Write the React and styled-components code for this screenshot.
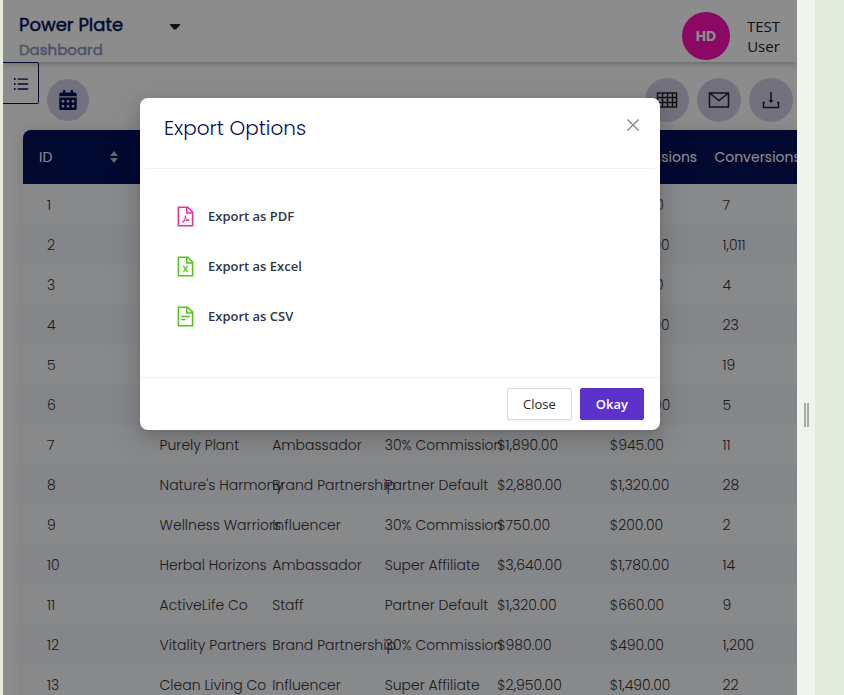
import React from "react";
import styled, { createGlobalStyle } from "styled-components";
import {
  AiOutlineClose,
  AiOutlineFileExcel,
  AiOutlineFilePdf,
  AiOutlineFileText,
  AiOutlineUnorderedList,
} from "react-icons/ai";
import { FaCalendarAlt } from "react-icons/fa";

const display = `Poppins, Inter, "Open Sans", sans-serif`;
const body = `"Segoe UI", "Open Sans", "Noto Sans", sans-serif`;
const navy = "#04125a";

const GlobalStyle = createGlobalStyle`
  *, *::before, *::after { box-sizing: border-box; }
  body { margin: 0; font-family: ${body}; font-size: 14px; color: #222; }
  button { font: inherit; cursor: pointer; }
`;

const Shell = styled.div`
  display: flex;
  height: 100vh;
  background: #e2ebdc;
  padding-left: 3px;
`;

const Screen = styled.div`
  position: relative;
  flex: 1;
  min-width: 0;
  overflow: hidden;
  background: #fff;
`;

const Splitter = styled.div`
  display: flex;
  align-items: center;
  justify-content: center;
  gap: 1px;
  width: 18px;
  padding-top: 134px;
  background: #eff5eb;
`;

const Grip = styled.span`
  width: 2px;
  height: 24px;
  background: #a8aba5;
`;

const SidePanel = styled.aside`
  width: 29px;
`;

const Header = styled.header`
  display: flex;
  justify-content: space-between;
  height: 62px;
  padding: 12px 16px;
  box-shadow: 0 2px 6px rgba(0, 0, 0, 0.25);
`;

const Brand = styled.div`
  font-family: ${display};
  color: ${navy};
`;

const BrandPicker = styled.button`
  display: flex;
  align-items: center;
  justify-content: space-between;
  width: 162px;
  height: 24px;
  padding: 0;
  border: 0;
  background: none;
  color: ${navy};
  font-size: 18px;
  font-weight: 400;
  -webkit-text-stroke: 0.5px currentColor;
`;

const Subtitle = styled.div`
  color: #8f95bd;
  font-size: 15px;
  font-weight: 400;
  line-height: 28px;
  -webkit-text-stroke: 0.5px currentColor;
`;

const Account = styled.div`
  display: flex;
  align-items: center;
  gap: 16px;
  height: 48px;
  font-size: 15px;
  font-weight: 500;
  line-height: 20px;
  text-align: center;
`;

const Avatar = styled.span`
  width: 48px;
  height: 48px;
  border-radius: 50%;
  background: #ff10b8;
  color: #fff;
  font-family: ${display};
  font-size: 14px;
  font-weight: 700;
  line-height: 48px;
`;

const UserName = styled.span`
  width: 35px;
`;

const Toolbar = styled.div`
  display: flex;
  align-items: flex-start;
  gap: 8px;
  height: 68px;
  padding-right: 4px;
`;

const MenuToggle = styled.button`
  display: flex;
  align-items: center;
  justify-content: center;
  width: 36px;
  height: 42px;
  padding: 2px 0 0;
  border: 1px solid ${navy};
  border-left: 0;
  border-radius: 0 2px 2px 0;
  background: none;
  color: ${navy};
  font-size: 18px;
`;

const RoundButton = styled.button`
  display: flex;
  align-items: center;
  justify-content: center;
  width: ${(p) => p.$size}px;
  height: ${(p) => p.$size}px;
  margin-top: ${(p) => 38 - p.$size / 2}px;
  padding: 0;
  border: 0;
  border-radius: 50%;
  background: #cfd0e8;
  color: ${(p) => p.$color || "#222"};
`;

const ToolbarActions = styled.div`
  display: flex;
  gap: 8px;
  margin-left: auto;
`;

const TableArea = styled.main`
  margin-left: 20px;
  border-radius: 8px 0 0 0;
  box-shadow: 0 0 16px rgba(0, 0, 0, 0.12);
`;

const Table = styled.table`
  width: 100%;
  min-width: 788px;
  table-layout: fixed;
  border-spacing: 0;
  font-family: ${display};
  white-space: nowrap;
`;

const HeadCell = styled.th`
  height: 55px;
  padding: 0 18px 0 16px;
  border-bottom: 1px solid #f7f9fc;
  background: ${navy};
  color: #fff;
  font-size: 14px;
  font-weight: 400;
  text-align: left;

  &:first-child { border-top-left-radius: 8px; }
`;

const HeadLabel = styled.span`
  display: flex;
  align-items: center;
  justify-content: space-between;
`;

const Row = styled.tr`
  background: #f8f9fb;
  &:nth-child(even) { background: #f3f4fa; }
`;

const Cell = styled.td`
  height: 40px;
  padding: 0 0 0 24px;
  color: #333;
  font-size: 14px;
  font-weight: 300;
`;

const Mask = styled.div`
  position: absolute;
  inset: 0;
  display: flex;
  align-items: flex-start;
  justify-content: center;
  padding: 98px 24px 24px;
  background: rgba(0, 0, 0, 0.45);
`;

const Dialog = styled.section`
  width: 520px;
  max-width: 100%;
  border-radius: 8px;
  background: #fff;
  box-shadow: 0 3px 6px -4px rgba(0, 0, 0, 0.12), 0 6px 16px rgba(0, 0, 0, 0.12),
    0 9px 28px 8px rgba(0, 0, 0, 0.08);
`;

const DialogHeader = styled.div`
  display: flex;
  align-items: flex-start;
  justify-content: space-between;
  height: 71px;
  padding: 16px 16px 16px 24px;
  border-bottom: 1px solid #f0f0f0;
  border-radius: 8px;
`;

const DialogTitle = styled.h2`
  margin: 0;
  color: ${navy};
  font-family: ${display};
  font-size: 20px;
  font-weight: 300;
  line-height: 28px;
`;

const CloseIconButton = styled.button`
  display: flex;
  padding: 2px;
  border: 0;
  background: none;
  color: #8c8c8c;
  font-size: 18px;
`;

const Options = styled.div`
  display: flex;
  flex-direction: column;
  align-items: flex-start;
  gap: 18px;
  padding: 31px 34px 45px;
`;

const Option = styled.button`
  display: flex;
  align-items: center;
  gap: 11px;
  height: 32px;
  padding: 0;
  border: 0;
  background: none;
  color: #2d3748;
  font-size: 13px;
  font-weight: 600;

  svg { color: ${(p) => p.$color}; font-size: 23px; }
`;

const DialogFooter = styled.div`
  display: flex;
  justify-content: flex-end;
  gap: 8px;
  padding: 10px 16px;
  border-top: 1px solid #f0f0f0;
`;

const FooterButton = styled.button`
  height: 32px;
  padding: 0 15px;
  border: 1px solid ${(p) => (p.$primary ? "#5c31cc" : "#d9d9d9")};
  border-radius: 2px;
  background: ${(p) => (p.$primary ? "#5c31cc" : "#fff")};
  color: ${(p) => (p.$primary ? "#fff" : "#262626")};
  font-size: 13px;
  font-weight: ${(p) => (p.$primary ? 600 : 400)};
  box-shadow: 0 2px 0 rgba(0, 0, 0, 0.04);
`;

const CaretIcon = () => (
  <svg width="12" height="14" viewBox="0 -6 12 14" fill="#222" aria-hidden="true">
    <path d="M1 1h10v1L7 6.5H5L1 2z" />
  </svg>
);

const SortIcon = () => (
  <svg width="8" height="12" viewBox="0 0 8 12" fill="#bfbfbf" aria-hidden="true">
    <path d="M0 5 4 0l4 5zM0 7h8l-4 5z" />
  </svg>
);

const GridIcon = () => (
  <svg width="22" height="18" viewBox="0 0 22 18" fill="none" stroke="currentColor" strokeWidth="1.5" aria-hidden="true">
    <path d="M1.5 2h19v14h-19zM1.5 6.5h19M1.5 11.5h19M6.5 2v14M11.5 2v14M16.5 2v14" />
  </svg>
);

const MailIcon = () => (
  <svg width="22" height="18" viewBox="0 0 22 18" fill="none" stroke="currentColor" strokeWidth="1.5" aria-hidden="true">
    <path d="M1.5 2h19v14h-19zM1.5 2 11 9.5 20.5 2" />
  </svg>
);

const DownloadIcon = () => (
  <svg width="18" height="18" viewBox="0 0 18 18" fill="none" stroke="currentColor" strokeWidth="1.5" aria-hidden="true">
    <path d="M3 11.5H1.5v5h15v-5H15M9 1v9" />
    <path d="M6.5 9h5L9 12.2z" fill="currentColor" stroke="none" />
  </svg>
);

const columns = ["ID", "", "", "", "", "Commissions", "Conversions"];

const rows = [
  ["1", "", "", "", "", "$480.00", "7"],
  ["2", "", "", "", "", "$1,200.00", "1,011"],
  ["3", "", "", "", "", "$360.00", "4"],
  ["4", "", "", "", "", "$2,100.00", "23"],
  ["5", "", "", "", "", "", "19"],
  ["6", "", "", "", "", "$1,050.00", "5"],
  ["7", "Purely Plant", "Ambassador", "30% Commission", "$1,890.00", "$945.00", "11"],
  ["8", "Nature's Harmony", "Brand Partnership", "Partner Default", "$2,880.00", "$1,320.00", "28"],
  ["9", "Wellness Warriors", "Influencer", "30% Commission", "$750.00", "$200.00", "2"],
  ["10", "Herbal Horizons", "Ambassador", "Super Affiliate", "$3,640.00", "$1,780.00", "14"],
  ["11", "ActiveLife Co", "Staff", "Partner Default", "$1,320.00", "$660.00", "9"],
  ["12", "Vitality Partners", "Brand Partnership", "30% Commission", "$980.00", "$490.00", "1,200"],
  ["13", "Clean Living Co", "Influencer", "Super Affiliate", "$2,950.00", "$1,490.00", "22"],
];

export default function App() {
  return (
    <>
      <GlobalStyle />
      <Shell>
        <Screen>
          <Header>
            <Brand>
              <BrandPicker>
                Power Plate
                <CaretIcon />
              </BrandPicker>
              <Subtitle>Dashboard</Subtitle>
            </Brand>
            <Account>
              <Avatar>HD</Avatar>
              <UserName>TEST User</UserName>
            </Account>
          </Header>
          <Toolbar>
            <MenuToggle aria-label="Menu">
              <AiOutlineUnorderedList />
            </MenuToggle>
            <RoundButton $size={42} $color={navy} aria-label="Calendar">
              <FaCalendarAlt size={20} />
            </RoundButton>
            <ToolbarActions>
              <RoundButton $size={44} aria-label="Table">
                <GridIcon />
              </RoundButton>
              <RoundButton $size={44} aria-label="Mail">
                <MailIcon />
              </RoundButton>
              <RoundButton $size={44} aria-label="Export">
                <DownloadIcon />
              </RoundButton>
            </ToolbarActions>
          </Toolbar>
          <TableArea>
            <Table>
              <thead>
                <tr>
                  {columns.map((label, i) => (
                    <HeadCell key={i} scope="col">
                      <HeadLabel>
                        {label}
                        {i === 0 && <SortIcon />}
                      </HeadLabel>
                    </HeadCell>
                  ))}
                </tr>
              </thead>
              <tbody>
                {rows.map((row) => (
                  <Row key={row[0]}>
                    {row.map((value, i) => (
                      <Cell key={i}>{value}</Cell>
                    ))}
                  </Row>
                ))}
              </tbody>
            </Table>
          </TableArea>
          <Mask>
            <Dialog role="dialog" aria-modal="true" aria-labelledby="export-title">
              <DialogHeader>
                <DialogTitle id="export-title">Export Options</DialogTitle>
                <CloseIconButton aria-label="Close dialog">
                  <AiOutlineClose />
                </CloseIconButton>
              </DialogHeader>
              <Options>
                <Option $color="#eb2f96">
                  <AiOutlineFilePdf />
                  Export as PDF
                </Option>
                <Option $color="#52c41a">
                  <AiOutlineFileExcel />
                  Export as Excel
                </Option>
                <Option $color="#52c41a">
                  <AiOutlineFileText />
                  Export as CSV
                </Option>
              </Options>
              <DialogFooter>
                <FooterButton>Close</FooterButton>
                <FooterButton $primary>Okay</FooterButton>
              </DialogFooter>
            </Dialog>
          </Mask>
        </Screen>
        <Splitter>
          <Grip />
          <Grip />
        </Splitter>
        <SidePanel />
      </Shell>
    </>
  );
}
